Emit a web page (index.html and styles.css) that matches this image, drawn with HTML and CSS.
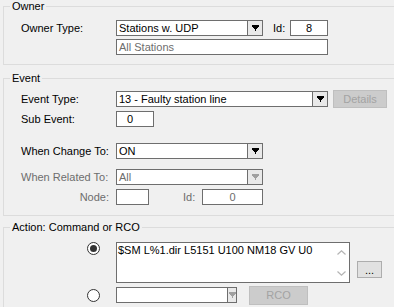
FILE: index.html
```html
<!DOCTYPE html>
<html lang="en">
<head>
    <meta charset="UTF-8">
    <title>Action</title>
    <link rel="stylesheet" href="styles.css">
</head>
<body>
    <fieldset class="group owner">
        <legend>Owner</legend>
        <div class="row first">
            <span class="lbl">Owner Type:</span>
            <div class="combo w147">
                <span class="val">Stations w. UDP</span>
                <span class="drop"><svg width="7" height="6" viewBox="0 0 7 6" shape-rendering="crispEdges"><path d="M0 0H7V2H6V3H5V4H4V6H3V4H2V3H1V2H0Z"/></svg></span>
            </div>
            <span class="lbl-id">Id:</span>
            <div class="edit w38 center">8</div>
        </div>
        <div class="row tight">
            <span class="lbl"></span>
            <div class="edit w212 dim">All Stations</div>
        </div>
    </fieldset>

    <fieldset class="group event">
        <legend>Event</legend>
        <div class="row first">
            <span class="lbl">Event Type:</span>
            <div class="combo w212">
                <span class="val">13 - Faulty station line</span>
                <span class="drop"><svg width="7" height="6" viewBox="0 0 7 6" shape-rendering="crispEdges"><path d="M0 0H7V2H6V3H5V4H4V6H3V4H2V3H1V2H0Z"/></svg></span>
            </div>
            <button class="btn off details">Details</button>
        </div>
        <div class="row near">
            <span class="lbl">Sub Event:</span>
            <div class="edit w38 pad">0</div>
        </div>
        <div class="row far">
            <span class="lbl">When Change To:</span>
            <div class="combo w147">
                <span class="val">ON</span>
                <span class="drop"><svg width="7" height="6" viewBox="0 0 7 6" shape-rendering="crispEdges"><path d="M0 0H7V2H6V3H5V4H4V6H3V4H2V3H1V2H0Z"/></svg></span>
            </div>
        </div>
        <div class="row mid">
            <span class="lbl dim">When Related To:</span>
            <div class="combo w147 disabled">
                <span class="val">All</span>
                <span class="drop"><svg width="7" height="6" viewBox="0 0 7 6" shape-rendering="crispEdges"><path d="M0 0H7V2H6V3H5V4H4V6H3V4H2V3H1V2H0Z"/></svg></span>
            </div>
        </div>
        <div class="row near">
            <span class="lbl dim right">Node:</span>
            <div class="edit w33"></div>
            <span class="lbl-id node-id dim">Id:</span>
            <div class="edit w61 center dim">0</div>
        </div>
    </fieldset>

    <fieldset class="group action">
        <legend>Action: Command or RCO</legend>
        <div class="row memo-row">
            <span class="lbl"><span class="radio on"></span></span>
            <div class="memo">
                <div class="memo-text">$SM L%1.dir L5151 U100 NM18 GV U0</div>
                <div class="vscroll">
                    <svg width="9" height="5" viewBox="0 0 9 5"><path d="M0.5 4.5L4.5 0.8L8.5 4.5" fill="none" stroke="#b4b4b4" stroke-width="1.2"/></svg>
                    <svg width="9" height="5" viewBox="0 0 9 5"><path d="M0.5 0.5L4.5 4.2L8.5 0.5" fill="none" stroke="#b4b4b4" stroke-width="1.2"/></svg>
                </div>
            </div>
            <button class="btn dots">...</button>
        </div>
        <div class="row near">
            <span class="lbl"><span class="radio"></span></span>
            <div class="combo w121 disabled">
                <span class="val"></span>
                <span class="drop narrow"><svg width="7" height="6" viewBox="0 0 7 6" shape-rendering="crispEdges"><path d="M0 0H7V2H6V3H5V4H4V6H3V4H2V3H1V2H0Z"/></svg></span>
            </div>
            <button class="btn off rco">RCO</button>
        </div>
    </fieldset>
</body>
</html>
```

FILE: styles.css
```css
* {
    box-sizing: border-box;
}
body {
    margin: 0;
    background: #f0f0f0;
    font-family: "Liberation Sans", Arial, sans-serif;
    font-size: 11px;
    line-height: 13px;
    color: #000;
    overflow: hidden;
}
/* group boxes run off the right edge of the window */
.group {
    margin: 0 0 0 3px;
    padding: 0;
    border: 1px solid #dcdcdc;
    border-right: none;
    min-width: 0;
}
.group legend {
    margin-left: 6px;
    padding: 0 2px;
    line-height: 13px;
}
.owner {
    padding-bottom: 9px;
}
.event {
    margin-top: 7px;
    padding-bottom: 10px;
}
.action {
    margin-top: 5px;
    height: 86px;
    border-bottom: none;
}
.row {
    display: flex;
    align-items: center;
    height: 16px;
    padding-left: 17px;
}
.row.first { margin-top: 6px; }
.owner .row.first { margin-top: 7px; }
.row.tight { margin-top: 3px; }
.row.near { margin-top: 4px; }
.row.mid { margin-top: 10px; }
.row.far { margin-top: 16px; }
.lbl {
    width: 95px;
    flex: none;
    white-space: nowrap;
}
.lbl.right {
    width: 88px;
    margin-right: 7px;
    text-align: right;
}
.lbl-id {
    width: 17px;
    margin-left: 10px;
    flex: none;
}
.lbl-id.node-id {
    width: 19px;
    margin-left: 34px;
}
.dim {
    color: #6d6d6d;
}
.edit {
    height: 16px;
    border: 1px solid #6e6e6e;
    background: #fff;
    padding-left: 2px;
    line-height: 14px;
    white-space: nowrap;
    flex: none;
}
.edit.center {
    text-align: center;
    padding-left: 0;
}
.edit.pad {
    padding-left: 10px;
}
.w33 { width: 33px; }
.w38 { width: 38px; }
.w61 { width: 61px; }
.w121 { width: 121px; }
.w147 { width: 147px; }
.w212 { width: 212px; }
.combo {
    display: flex;
    height: 16px;
    border: 1px solid #6e6e6e;
    background: #fff;
    flex: none;
}
.combo .val {
    flex: 1;
    padding-left: 2px;
    line-height: 14px;
    white-space: nowrap;
    overflow: hidden;
}
.combo .drop {
    width: 15px;
    border-left: 1px solid #6e6e6e;
    background: #e9e9e9;
    display: flex;
    align-items: center;
    justify-content: center;
}
.combo .drop.narrow {
    width: 9px;
}
.combo.disabled .val {
    color: #6d6d6d;
}
.combo.disabled .drop svg {
    fill: #a0a0a0;
}
.btn {
    font-family: inherit;
    font-size: 11px;
    padding: 0;
    flex: none;
    border: 1px solid #adadad;
    background: #e1e1e1;
    color: #000;
}
.btn.off {
    background: #cccccc;
    border-color: #bfbfbf;
    color: #a3a3a3;
}
.details {
    width: 54px;
    height: 18px;
    margin-left: 5px;
}
.memo-row {
    height: 41px;
    margin-top: 8px;
    align-items: flex-start;
}
.memo {
    display: flex;
    width: 234px;
    height: 41px;
    border: 1px solid #6e6e6e;
    background: #fff;
    flex: none;
}
.memo-text {
    flex: 1;
    padding: 1px 0 0 1px;
}
.vscroll {
    width: 16px;
    display: flex;
    flex-direction: column;
    justify-content: space-between;
    align-items: center;
    padding: 7px 0 6px;
}
.dots {
    width: 25px;
    height: 17px;
    margin: 19px 0 0 7px;
    line-height: 10px;
}
.radio {
    display: block;
    width: 13px;
    height: 13px;
    margin-left: 66px;
    border: 1px solid #333;
    border-radius: 50%;
    background: #fff;
    position: relative;
}
.radio.on::after {
    content: "";
    position: absolute;
    left: 2px;
    top: 2px;
    width: 7px;
    height: 7px;
    border-radius: 50%;
    background: #333;
}
.rco {
    width: 59px;
    height: 19px;
    margin-left: 12px;
}
```
